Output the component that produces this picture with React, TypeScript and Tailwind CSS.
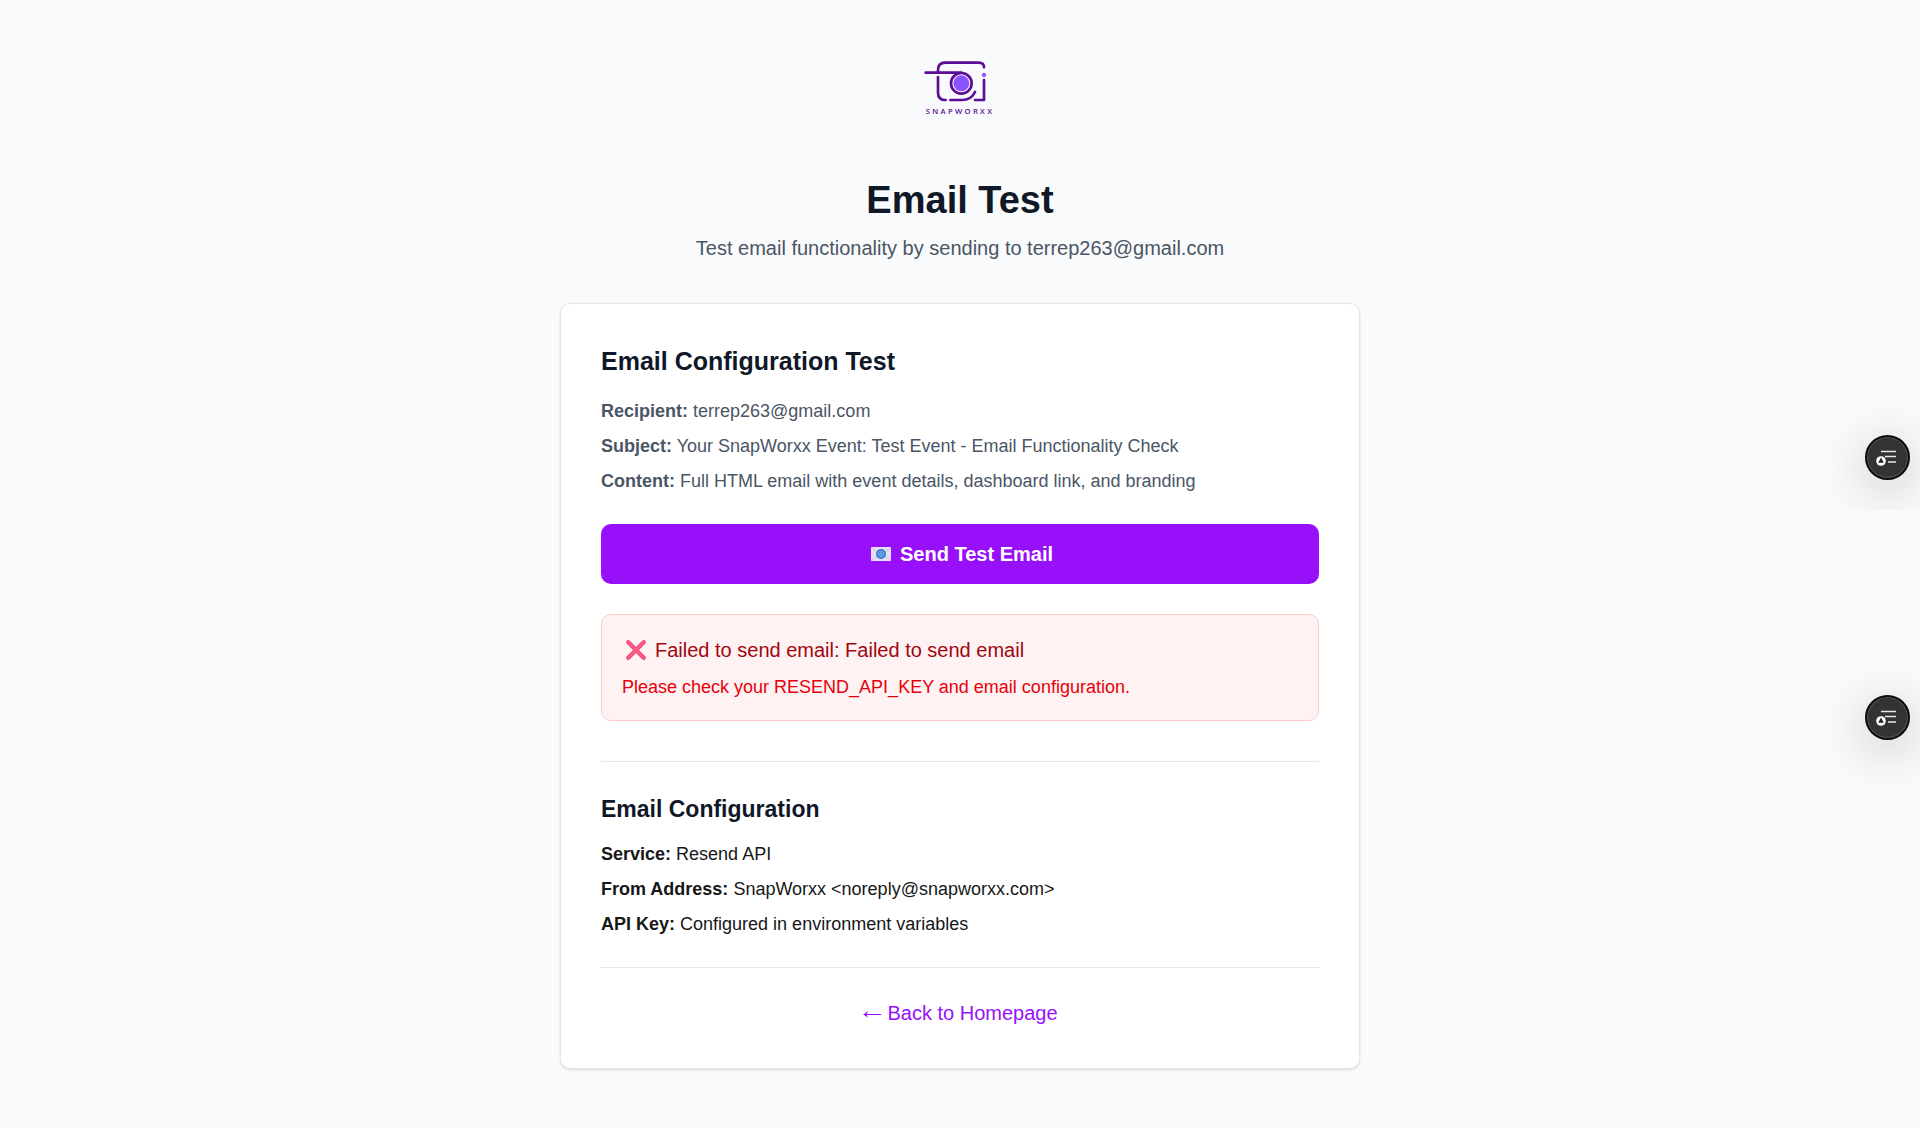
import type { ReactNode } from "react";

function Logo() {
  return (
    <svg viewBox="0 0 360 270" className="h-[90px] w-[120px]" fill="none" role="img" aria-label="SnapWorxx">
      <g stroke="#5a0d96" strokeWidth="8" strokeLinecap="round" strokeLinejoin="round">
        <path d="M114 96V90Q114 68 136 68H236Q252 68 252 82" />
        <path d="M77 98H184" />
        <path d="M114 111V158Q114 180 137 180" />
        <path d="M151 180H186Q214 180 225 156" />
        <path d="M252 120V180H225" />
        <circle cx="184" cy="130" r="31" />
      </g>
      <circle cx="184" cy="130" r="24" fill="#8c52ff" />
      <circle cx="252" cy="105" r="6.5" fill="#8c52ff" />
      <text x="77" y="221" fill="#5a0d96" fontSize="23" fontWeight="600" letterSpacing="7" fontFamily="Open Sans, sans-serif">
        SNAPWORXX
      </text>
    </svg>
  );
}

function MailIcon() {
  return (
    <svg viewBox="0 0 20 14" className="h-[14px] w-5" aria-hidden="true">
      <rect width="20" height="14" fill="#e6def4" />
      <path d="M0 14l7-6M20 14l-7-6M0 0l7 6M20 0l-7 6" stroke="#cfc3e6" strokeWidth="1" />
      <circle cx="10" cy="7" r="5" fill="#2f7bd0" />
      <circle cx="10" cy="7" r="3" fill="none" stroke="#8fb8ea" strokeWidth="0.8" />
      <circle cx="10" cy="7" r="1.3" fill="none" stroke="#a9c8ef" strokeWidth="0.7" />
    </svg>
  );
}

function CrossIcon() {
  return (
    <svg viewBox="0 0 20 20" className="size-5" fill="none" strokeLinecap="round" aria-hidden="true">
      <path d="M2.3 2.3l15.4 15.4M17.7 2.3l-15.4 15.4" stroke="#ee4372" strokeWidth="4.2" />
      <path d="M2.3 2.3l15.4 15.4M17.7 2.3l-15.4 15.4" stroke="#fb5c87" strokeWidth="2.6" />
    </svg>
  );
}

function ArrowLeftIcon() {
  return (
    <svg viewBox="0 0 20 10" className="h-[10px] w-5" fill="none" aria-hidden="true">
      <path d="M2 6.5H19" stroke="currentColor" strokeWidth="1" />
      <path d="M6 2.5Q4.5 5 1 6.5Q4.5 8 6 10L4.5 6.5Z" fill="currentColor" />
    </svg>
  );
}

function Field({ label, children }: { label: string; children: ReactNode }) {
  return (
    <p>
      <strong className="font-bold">{label}</strong> {children}
    </p>
  );
}

function FloatingButton({ label }: { label: string }) {
  return (
    <button
      type="button"
      aria-label={label}
      className="flex size-[45px] items-center justify-center rounded-full border-2 border-[#0c0c0c] bg-[#333333] shadow-[inset_0_0_0_1px_#555555,0_10px_50px_rgba(0,0,0,0.24)]"
    >
      <svg viewBox="0 0 65 55" className="h-[55px] w-[65px] shrink-0" fill="none" aria-hidden="true">
        <path d="M26 21.5h15M30 26.5h11M33 32h8" stroke="#e8e8e8" strokeWidth="1.5" />
        <circle cx="26" cy="31" r="4.8" fill="#fff" />
        <path d="M26 27.5l2.8 5.3h-5.6z" fill="#222" />
      </svg>
    </button>
  );
}

export default function App() {
  return (
    <div className="min-h-screen bg-gray-50 px-5 pt-10 pb-[60px] font-['Liberation_Sans',Arial,sans-serif] text-[20px] leading-[30px] text-[#171717]">
      <main className="mx-auto w-full max-w-[800px]">
        <header className="mb-10 flex flex-col items-center text-center">
          <div className="mb-12">
            <Logo />
          </div>
          <h1 className="mb-[10px] text-[38px] leading-[45px] font-bold text-gray-900">Email Test</h1>
          <p className="text-gray-600">Test email functionality by sending to terrep263@gmail.com</p>
        </header>

        <section className="rounded-[10px] border border-gray-200 bg-white p-10 shadow-sm">
          <h2 className="mb-5 text-[25px] leading-[35px] font-bold text-gray-900">Email Configuration Test</h2>
          <div className="mb-[30px] flex flex-col gap-[10px] text-[18px] leading-[25px] text-gray-600">
            <Field label="Recipient:">terrep263@gmail.com</Field>
            <Field label="Subject:">Your SnapWorxx Event: Test Event - Email Functionality Check</Field>
            <Field label="Content:">Full HTML email with event details, dashboard link, and branding</Field>
          </div>

          <button
            type="button"
            className="flex w-full items-center justify-center gap-[9px] rounded-[10px] bg-[#9810fa] py-[15px] pr-1 pl-2 font-bold text-white"
          >
            <MailIcon />
            Send Test Email
          </button>

          <div role="alert" className="mt-[30px] rounded-[10px] border border-[#ffc9c9] bg-[#fef2f2] p-5">
            <p className="mb-[10px] flex items-center gap-[9px] pl-1 text-[#9f0712]">
              <CrossIcon />
              Failed to send email: Failed to send email
            </p>
            <p className="text-[18px] leading-[25px] text-[#e7000b]">
              Please check your RESEND_API_KEY and email configuration.
            </p>
          </div>

          <div className="mt-10 border-t border-gray-200 pt-[30px]">
            <h3 className="mb-[15px] text-[23px] leading-[35px] font-bold text-gray-900">Email Configuration</h3>
            <div className="flex flex-col gap-[10px] text-[18px] leading-[25px]">
              <Field label="Service:">Resend API</Field>
              <Field label="From Address:">SnapWorxx &lt;noreply@snapworxx.com&gt;</Field>
              <Field label="API Key:">Configured in environment variables</Field>
            </div>
          </div>

          <div className="mt-[30px] flex justify-center border-t border-gray-200 pt-[30px]">
            <a href="#home" className="flex items-center gap-[5px] text-[#9810fa]">
              <ArrowLeftIcon />
              Back to Homepage
            </a>
          </div>
        </section>
      </main>

      <aside className="fixed top-[350px] right-0 flex flex-col gap-[100px]">
        <div className="flex h-[160px] w-[120px] items-end justify-end overflow-hidden pr-[10px] pb-[30px]">
          <FloatingButton label="Open reading list" />
        </div>
        <div className="flex h-[200px] w-[120px] items-end justify-end overflow-hidden pr-[10px] pb-[70px]">
          <FloatingButton label="Open side panel" />
        </div>
      </aside>
    </div>
  );
}
